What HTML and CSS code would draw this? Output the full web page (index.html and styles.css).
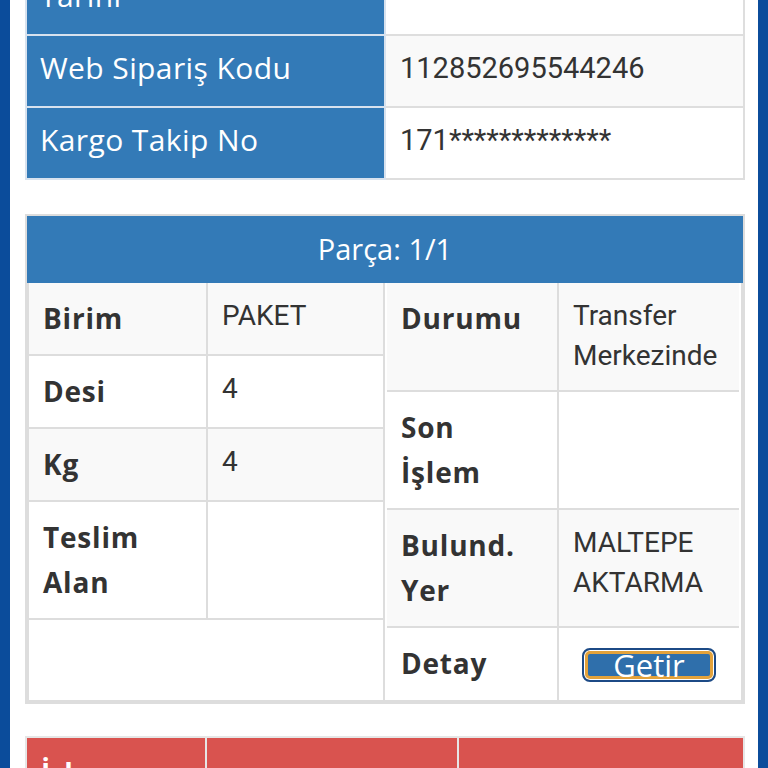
FILE: index.html
```html
<!DOCTYPE html>
<html lang="tr">
<head>
<meta charset="utf-8">
<link rel="stylesheet" href="styles.css">
</head>
<body>
<div class="frame">
  <div class="side"></div>
  <main class="main">
    <table class="info">
      <colgroup><col class="half"><col class="half"></colgroup>
      <tr><th>Teslim<br>Tarihi</th><td></td></tr>
      <tr class="odd"><th>Web Sipariş Kodu</th><td>112852695544246</td></tr>
      <tr><th>Kargo Takip No</th><td>171*************</td></tr>
    </table>

    <section class="part">
      <div class="part-head">Parça: 1/1</div>
      <div class="part-body">
        <div class="part-col">
          <table class="kv kv-left">
            <colgroup><col class="k-left"><col></colgroup>
            <tr class="odd"><th>Birim</th><td>PAKET</td></tr>
            <tr><th>Desi</th><td>4</td></tr>
            <tr class="odd"><th>Kg</th><td>4</td></tr>
            <tr><th>Teslim<br>Alan</th><td></td></tr>
          </table>
        </div>
        <div class="part-col">
          <table class="kv kv-right">
            <colgroup><col class="k-right"><col></colgroup>
            <tr class="odd tall"><th>Durumu</th><td>Transfer<br>Merkezinde</td></tr>
            <tr><th>Son<br>İşlem</th><td></td></tr>
            <tr class="odd"><th>Bulund.<br>Yer</th><td>MALTEPE<br>AKTARMA</td></tr>
            <tr><th>Detay</th><td class="btn-cell"><button class="getir">Getir</button></td></tr>
          </table>
        </div>
      </div>
    </section>

    <table class="moves">
      <colgroup><col class="m1"><col class="m2"><col></colgroup>
      <tr><th>İşlem<br>Tarihi</th><th></th><th></th></tr>
    </table>
  </main>
  <div class="side"></div>
</div>
</body>
</html>
```

FILE: styles.css
```css
html, body {
  margin: 0;
  padding: 0;
  background: #ffffff;
  height: 768px;
  overflow: hidden;
}

.frame {
  display: flex;
  height: 768px;
  overflow: hidden;
}

.side {
  width: 10px;
  flex: 0 0 10px;
  background: #0b4c9b;
}

.main {
  flex: 1;
  padding: 0 13px 0 15px;
  margin-top: -82px;
  font-family: Roboto, "Liberation Sans", sans-serif;
  color: #333333;
}

table {
  border-collapse: collapse;
  width: 100%;
  table-layout: fixed;
}

.half { width: 50%; }

.info th,
.info td {
  border: 2px solid #dedede;
  padding: 10px 13px 16px 13px;
  line-height: 44px;
  font-size: 29px;
  text-align: left;
  vertical-align: top;
}

.info th {
  background: #337ab7;
  color: #ffffff;
  font-family: "Open Sans", Lato, sans-serif;
  font-size: 30px;
  letter-spacing: 0.4px;
  font-weight: 400;
  border-color: #d8e2ee;
}

.info td {
  color: #333333;
  padding-left: 14px;
}

.info .odd td { background: #f9f9f9; }

.part {
  margin-top: 34px;
  border: 2px solid #dddddd;
}

.part-head {
  background: #337ab7;
  color: #ffffff;
  text-align: center;
  font-family: "Open Sans", Lato, sans-serif;
  font-size: 29px;
  line-height: 65px;
  height: 67px;
}

.part-body {
  display: grid;
  grid-template-columns: 1fr 1fr;
}

.part-col {
  border: 2px solid #dddddd;
  border-top: 0;
}

.part-col + .part-col {
  border-left: 0;
  padding: 0 2px 0 2px;
}

.kv th,
.kv td {
  border: 2px solid #dddddd;
  padding: 13px 14px;
  text-align: left;
  vertical-align: top;
}

.kv tr:first-child th,
.kv tr:first-child td { border-top: 0; }
.kv th:first-child { border-left: 0; }
.kv td:last-child { border-right: 0; }

.kv th {
  font-family: "Open Sans", Lato, sans-serif;
  font-weight: 700;
  font-size: 28px;
  letter-spacing: 0.8px;
  line-height: 45px;
  color: #333333;
}

.kv td {
  font-size: 28px;
  line-height: 40px;
  color: #333333;
}

.kv .tall td { padding-bottom: 14px; }

.k-left { width: 178px; }
.k-right { width: 171px; }

.kv .odd th,
.kv .odd td { background: #f9f9f9; }

.kv-right tr:last-child th,
.kv-right tr:last-child td { border-bottom: 0; }

.kv td.btn-cell {
  padding: 20px 10px 12px 10px;
  text-align: center;
}

.getir {
  display: inline-block;
  width: 134px;
  height: 34px;
  padding: 0;
  border: 2px solid #1c4a86;
  border-radius: 8px;
  background: #2f6fab;
  color: #ffffff;
  font-family: "Open Sans", Lato, sans-serif;
  font-size: 31px;
  line-height: 26px;
  box-shadow: inset 0 0 0 1px #ffffff, inset 0 0 0 4px #e3a23b;
  cursor: pointer;
  overflow: visible;
}

.moves {
  margin-top: 32px;
}

.moves th {
  background: #d9534f;
  color: #ffffff;
  border: 2px solid #e6e6e6;
  padding: 13px 14px;
  font-family: "Open Sans", Lato, sans-serif;
  font-weight: 700;
  font-size: 28px;
  line-height: 45px;
  text-align: left;
  vertical-align: top;
}

.m1 { width: 180px; }
.m2 { width: 252px; }
```
